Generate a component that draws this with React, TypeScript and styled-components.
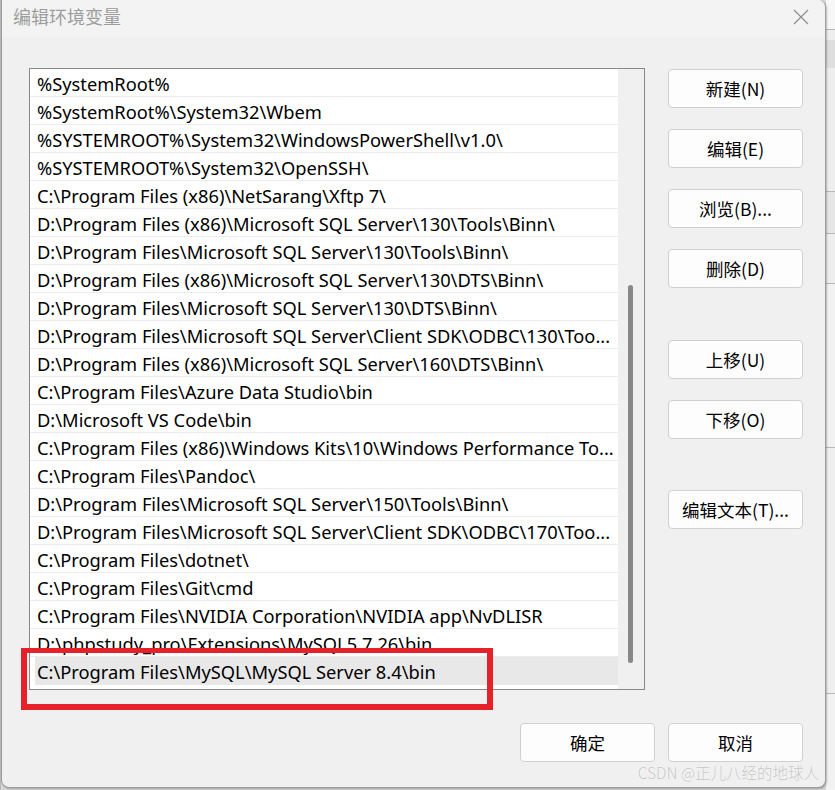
import React from "react";
import styled, { createGlobalStyle } from "styled-components";

const GlobalStyle = createGlobalStyle`
  html, body { margin: 0; padding: 0; background: #d8d8d8; }
  body { font-family: "Noto Sans", "Noto Sans CJK SC", sans-serif; }
  * { box-sizing: border-box; }
`;

const Screen = styled.div`
  width: 835px;
  height: 790px;
  display: flex;
  overflow: hidden;
  position: relative;
`;

const LeftEdge = styled.div`
  width: 1px;
  background: #b9b9b9;
`;

const Dialog = styled.div`
  width: 825px;
  height: 788px;
  display: flex;
  flex-direction: column;
  background: #f0f0f0;
  border: 1px solid #9c9c9c;
  border-top: none;
  border-radius: 0 8px 8px 8px;
  box-shadow: 1px 1px 2px rgba(0, 0, 0, 0.25);
  position: relative;
  overflow: hidden;
`;

const TitleBar = styled.div`
  height: 37px;
  display: flex;
  align-items: center;
  justify-content: space-between;
  padding: 0 16px 5px 11px;
  background: #f3f3f3;
`;

const Title = styled.span`
  font-family: "Noto Sans CJK SC", sans-serif;
  font-size: 18px;
  color: #9d9d9d;
`;

const CloseIcon = styled.svg`
  width: 16px;
  height: 16px;
  margin-top: 2px;
`;

const Body = styled.div`
  display: flex;
  padding: 31px 22px 0 27px;
  gap: 23px;
`;

const ListBox = styled.div`
  width: 616px;
  height: 622px;
  border: 1px solid #85888d;
  background: #ffffff;
  display: flex;
`;

const Rows = styled.div`
  flex: 1;
  display: flex;
  flex-direction: column;
  overflow: hidden;
`;

const Row = styled.div<{ $selected?: boolean }>`
  height: 28px;
  flex: none;
  display: flex;
  align-items: center;
  padding: 1px 0 0 7px;
  border-bottom: 1px solid ${(p) => (p.$selected ? "transparent" : "#ececec")};
  background: ${(p) =>
    p.$selected ? "linear-gradient(to right, #ffffff 5px, #e8e8e8 5px)" : "#ffffff"};
  font-family: "Noto Sans", "Noto Sans CJK SC", sans-serif;
  font-size: 18.3px;
  color: #000;
  white-space: nowrap;
  overflow: hidden;
`;

const ScrollTrack = styled.div`
  width: 26px;
  background: #f0f0f0;
  padding: 216px 0 0 10px;
`;

const ScrollThumb = styled.div`
  width: 5px;
  height: 378px;
  border-radius: 3px;
  background: #898989;
`;

const ButtonColumn = styled.div`
  width: 135px;
  display: flex;
  flex-direction: column;
  padding-top: 1px;
`;

const Button = styled.button<{ $gap?: number }>`
  width: 135px;
  height: 39px;
  margin-top: ${(p) => p.$gap ?? 0}px;
  background: #fdfdfd;
  border: 1px solid #d0d0d0;
  border-radius: 4px;
  font-family: "Noto Sans CJK SC", "Noto Sans", sans-serif;
  font-size: 17.5px;
  color: #000;
  padding: 0;
  cursor: default;
`;

const Footer = styled.div`
  display: flex;
  justify-content: flex-end;
  gap: 13px;
  padding: 33px 22px 0 0;
`;

const Highlight = styled.div`
  position: absolute;
  left: 21px;
  top: 648px;
  width: 472px;
  height: 62px;
  border: 6px solid #e62129;
  border-top-width: 5px;
  pointer-events: none;
`;

const Watermark = styled.div`
  position: absolute;
  right: 6px;
  bottom: 4px;
  font-family: "Noto Sans CJK SC", sans-serif;
  font-size: 15.5px;
  font-weight: 300;
  color: rgba(150, 150, 150, 0.55);
  text-shadow: 0 0 1px #ffffff;
  pointer-events: none;
`;

const RightStrip = styled.div`
  width: 9px;
  display: flex;
  flex-direction: column;
  background: #f4f4f4;
`;

const StripBlock = styled.div<{ $h: number; $bg: string; $line?: boolean }>`
  height: ${(p) => p.$h}px;
  background: ${(p) => p.$bg};
  border-bottom: ${(p) => (p.$line ? "1px solid #b8b8b8" : "none")};
  flex: none;
`;

const paths = [
  "%SystemRoot%",
  "%SystemRoot%\\System32\\Wbem",
  "%SYSTEMROOT%\\System32\\WindowsPowerShell\\v1.0\\",
  "%SYSTEMROOT%\\System32\\OpenSSH\\",
  "C:\\Program Files (x86)\\NetSarang\\Xftp 7\\",
  "D:\\Program Files (x86)\\Microsoft SQL Server\\130\\Tools\\Binn\\",
  "D:\\Program Files\\Microsoft SQL Server\\130\\Tools\\Binn\\",
  "D:\\Program Files (x86)\\Microsoft SQL Server\\130\\DTS\\Binn\\",
  "D:\\Program Files\\Microsoft SQL Server\\130\\DTS\\Binn\\",
  "D:\\Program Files\\Microsoft SQL Server\\Client SDK\\ODBC\\130\\Too...",
  "D:\\Program Files (x86)\\Microsoft SQL Server\\160\\DTS\\Binn\\",
  "C:\\Program Files\\Azure Data Studio\\bin",
  "D:\\Microsoft VS Code\\bin",
  "C:\\Program Files (x86)\\Windows Kits\\10\\Windows Performance To...",
  "C:\\Program Files\\Pandoc\\",
  "D:\\Program Files\\Microsoft SQL Server\\150\\Tools\\Binn\\",
  "D:\\Program Files\\Microsoft SQL Server\\Client SDK\\ODBC\\170\\Too...",
  "C:\\Program Files\\dotnet\\",
  "C:\\Program Files\\Git\\cmd",
  "C:\\Program Files\\NVIDIA Corporation\\NVIDIA app\\NvDLISR",
  "D:\\phpstudy_pro\\Extensions\\MySQL5.7.26\\bin",
  "C:\\Program Files\\MySQL\\MySQL Server 8.4\\bin",
];

const sideButtons: { label: string; gap: number }[] = [
  { label: "新建(N)", gap: 0 },
  { label: "编辑(E)", gap: 21 },
  { label: "浏览(B)...", gap: 21 },
  { label: "删除(D)", gap: 21 },
  { label: "上移(U)", gap: 52 },
  { label: "下移(O)", gap: 21 },
  { label: "编辑文本(T)...", gap: 51 },
];

export default function App() {
  return (
    <>
      <GlobalStyle />
      <Screen>
        <LeftEdge />
        <Dialog>
          <TitleBar>
            <Title>编辑环境变量</Title>
            <CloseIcon viewBox="0 0 16 16">
              <path d="M1 1 L15 15 M15 1 L1 15" stroke="#8a8a8a" strokeWidth="1.1" fill="none" />
            </CloseIcon>
          </TitleBar>
          <Body>
            <ListBox>
              <Rows>
                {paths.map((p, i) => (
                  <Row key={i} $selected={i === paths.length - 1}>
                    {p}
                  </Row>
                ))}
              </Rows>
              <ScrollTrack>
                <ScrollThumb />
              </ScrollTrack>
            </ListBox>
            <ButtonColumn>
              {sideButtons.map((b) => (
                <Button key={b.label} $gap={b.gap}>
                  {b.label}
                </Button>
              ))}
            </ButtonColumn>
          </Body>
          <Footer>
            <Button>确定</Button>
            <Button>取消</Button>
          </Footer>
          <Watermark>CSDN @正儿八经的地球人</Watermark>
        </Dialog>
        <Highlight />
        <RightStrip>
          <StripBlock $h={30} $bg="#f7f7f7" $line />
          <StripBlock $h={10} $bg="#eeeeee" />
          <StripBlock $h={28} $bg="#dedede" />
          <StripBlock $h={124} $bg="#eeeeee" $line />
          <StripBlock $h={42} $bg="#e6e6e6" $line />
          <StripBlock $h={50} $bg="#eeeeee" $line />
          <StripBlock $h={164} $bg="#f2f2f2" $line />
          <StripBlock $h={246} $bg="#efefef" $line />
          <StripBlock $h={95} $bg="#f2f2f2" />
        </RightStrip>
      </Screen>
    </>
  );
}
